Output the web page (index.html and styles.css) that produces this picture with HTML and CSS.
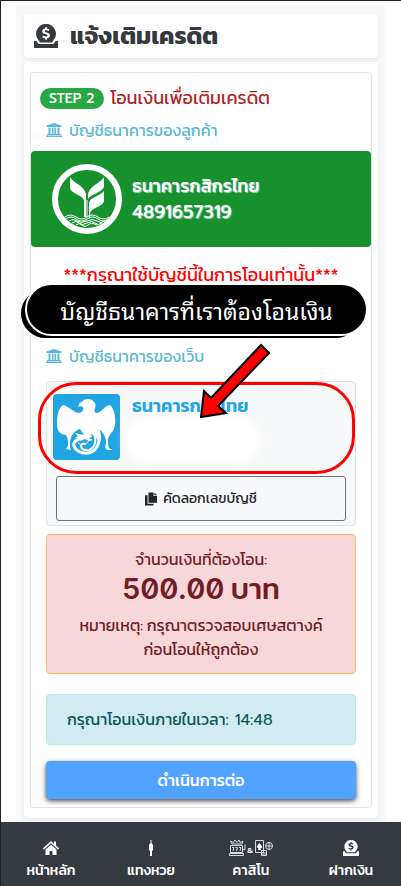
FILE: index.html
```
<!DOCTYPE html>
<html lang="th">
<head>
    <meta charset="UTF-8">
    <meta name="viewport" content="width=device-width, initial-scale=1.0">
    <title>แจ้งเติมเครดิต</title>
    <link rel="stylesheet" href="styles.css">
</head>
<body>
    <!-- shared icons -->
    <svg class="sprite" aria-hidden="true">
        <symbol id="icon-deposit" viewBox="0 0 24 24">
            <path fill-rule="evenodd" d="M12 0a9.800 9.800 0 0 1 7.500 16.200l-1.500 2.300H6l-1.500-2.300A9.800 9.800 0 0 1 12 0zM11.300 3v1.500c-1.900.2-3.100 1.200-3.100 2.700 0 1.700 1.500 2.400 3.200 2.900 1.500.4 2 .7 2 1.300 0 .7-.7 1.100-1.600 1.100-1 0-1.900-.4-2.800-1l-.9 1.700c.8.600 1.900 1 3.100 1.100v1.500h1.700v-1.500c1.900-.3 3-1.300 3-2.900 0-1.700-1.300-2.500-3.300-3-1.300-.4-1.900-.6-1.900-1.200s.6-.9 1.400-.9c.8 0 1.700.3 2.400.8l.9-1.700c-.7-.5-1.500-.8-2.500-.9V3z"/>
            <path d="M0 17h2.500l2 3h15l2-3H24v7H0z"/>
        </symbol>
        <symbol id="icon-bank" viewBox="0 0 16 14">
            <path d="M8 0l7.500 2.500V4H.5V2.500zM2.500 4.500h2V11h-2zM6 4.500h1.500V11H6zM8.500 4.500H10V11H8.500zM11.500 4.500h2V11h-2zM1 11h14v1H1zM0 12.500h16V14H0z"/>
        </symbol>
    </svg>

    <main class="wrapper">
        <header class="card page-title">
            <svg class="title-icon"><use href="#icon-deposit"/></svg>
            <h1>แจ้งเติมเครดิต</h1>
        </header>

        <section class="card content">
            <div class="step-box">
                <h2 class="step"><span class="badge">STEP 2</span> โอนเงินเพื่อเติมเครดิต</h2>

                <h3 class="label"><svg><use href="#icon-bank"/></svg>บัญชีธนาคารของลูกค้า</h3>
                <div class="customer-bank">
                    <svg class="kbank" viewBox="0 0 70 70" aria-hidden="true">
                        <circle cx="35" cy="35" r="32" fill="none" stroke="#fff" stroke-width="6"/>
                        <path fill="#fff" d="M18 13c3 6 14 8 16 17v23h-2V36C29 30 19 30 18 24zM52 13c-3 6-14 8-16 17v5c3-5 13-6 16-12zM52 27c-4 5-14 6-15 12v14h1V49C40 43 51 43 52 37zM34.500 36h1v17h-1z"/>
                        <g fill="none" stroke="#fff" stroke-width="1">
                            <path d="M13 53q5-4 11 0t11 0 11 0 11 0"/>
                            <path d="M14 55q5-4 10 0t11 0 11 0 10 0"/>
                            <path d="M17 57q4-3 8 0t10 0 10 0 8 0"/>
                            <path d="M20 59q4-3 7 0t8 0 8 0 7 0"/>
                            <path d="M24 61q3-3 6 0t6 0 9 0"/>
                        </g>
                    </svg>
                    <div class="bank-text">
                        <div>ธนาคารกสิกรไทย</div>
                        <div class="number">4891657319</div>
                    </div>
                </div>

                <div class="warning">
                    <p>***กรุณาใช้บัญชีนี้ในการโอนเท่านั้น***</p>
                    <div class="callout">บัญชีธนาคารที่เราต้องโอนเงิน</div>
                </div>

                <h3 class="label">
                    <svg><use href="#icon-bank"/></svg>บัญชีธนาคารของเว็บ
                </h3>
                <div class="web-bank">
                    <div class="web-bank-info">
                        <svg class="ktb" viewBox="0 0 67 66" aria-hidden="true">
                            <rect width="67" height="66" rx="4" fill="#1ea5e2"/>
                            <path fill="#fff" d="M26 10c1-2 3-2 4-3 1-2 7-3 10 0 3 2 3 5 2 7-1 3 0 5 2 5 5-1 7-7 13-8 4 3 6 13 5 20-1 7-6 9-7 14 0 4 0 7 1 9l3 2h-5l-2-3c2-4 1-11-3-15l-3-3c2 4 3 9 1 13-3-4-6-7-9-8l1 3-3 1 4 2-4 1-4-2-5 2-1-2-4-1 3-2-3-3 4 1 5 1-4-6c-5 1-10 7-10 14 0 3 0 5 1 7l-5-1 2-3c0-4 0-9-2-11C6 40 4 36 4 30c0-7 1-16 6-19 5 1 10 7 16 8 4-1 5-4 4-6-1-1-3-1-5 0z"/>
                            <g fill="none" stroke="#fff" stroke-linecap="round">
                                <path stroke-width="3" d="M45 40c3 9-2 18-10 19-7 1-13-3-14-7-1-3 1-6 4-6"/>
                                <path stroke-width="2" d="M40 39c4 6 3 14-4 17-4 1-8-1-8-4 0-2 2-3 4-2"/>
                                <path stroke-width="1" d="M25 49c4 3 9 2 11-3"/>
                            </g>
                        </svg>
                        <div class="bank-name">ธนาคารกรุงไทย</div>
                        <div class="smudge"></div>
                        <div class="highlight"></div>
                        <svg class="arrow" viewBox="0 0 72 78" aria-hidden="true">
                            <path fill="#f00" stroke="#000" stroke-width="2" d="M3 74L6 48l7 7L63 2l8 8-51 53 8 7z"/>
                        </svg>
                    </div>
                    <button type="button" class="copy-btn">
                        <svg viewBox="0 0 14 15" aria-hidden="true"><path d="M4 0h6v4h4v8H4zM11 0l3 3h-3zM0 3h3v10h7v2H0z"/></svg>
                        คัดลอกเลขบัญชี
                    </button>
                </div>

                <div class="amount">
                    <p>จำนวนเงินที่ต้องโอน:</p>
                    <strong><span class="money">500.00</span> บาท</strong>
                    <p>หมายเหตุ: กรุณาตรวจสอบเศษสตางค์<br>ก่อนโอนให้ถูกต้อง</p>
                </div>

                <div class="timer">กรุณาโอนเงินภายในเวลา<span class="number">: 14:48</span></div>
                <button type="button" class="next-btn">ดำเนินการต่อ</button>
            </div>
        </section>
    </main>

    <nav class="bottom-nav">
        <a href="#">
            <svg width="16" height="16" viewBox="0 0 16 16"><path d="M8 1l3 2.700V1.500h2v4l3 2.800-1 1.200L8 3.300 1 9.500 0 8.300zM8 4.800l5.500 4.800V15H9.500v-4h-3v4h-4V9.600z"/></svg>
            <span>หน้าหลัก</span>
        </a>
        <a href="#">
            <svg width="16" height="16" viewBox="0 0 16 16"><path d="M7.500 0h1v3l1.500 2v5l-1 1v5H7v-5l-1-1V5l1.500-2z"/></svg>
            <span>แทงหวย</span>
        </a>
        <a href="#">
            <svg width="44" height="16" viewBox="0 0 44 16">
                <g fill="none" stroke="#d8d9da">
                    <path d="M1.500 5.500h12v7h-12zM.5 13.500h14v2H.500zM14 9.500h2v-5M3 4L1.500 1l3 1.500L6 0l2 2.500L10 0l1 2.500L14 1l-1 3z"/>
                    <path d="M3 7.500h2L4 11M6.500 7.500h2L7.500 11M10 7.500h2L11 11"/>
                    <path d="M26.500.5h8v12h-8zM32.500 10.500h5v5h-5zM34 12v3M36 12v3"/>
                    <circle cx="40" cy="6" r="3.500"/><path d="M40 2.500v7M36.500 6h7"/>
                </g>
                <path d="M30.500 3l3 4-2 1.500.5 1.500h-3l.5-1.500-2-1.500z"/>
                <text x="18" y="13" font-size="9">&amp;</text>
            </svg>
            <span>คาสิโน</span>
        </a>
        <a href="#">
            <svg width="16" height="16"><use href="#icon-deposit"/></svg>
            <span>ฝากเงิน</span>
        </a>
    </nav>
</body>
</html>
```

FILE: styles.css
```
* {
    box-sizing: border-box;
}
body {
    margin: 0;
    padding: 5px 15px 60px;
    border-top: 1px solid #222;
    border-left: 1px solid #222;
    background: #fff;
    color: #212529;
    font-family: Kanit, Prompt, "Noto Sans Thai", "Noto Sans", sans-serif;
    font-size: 16px;
    line-height: 24px;
}
h1, h2, h3, p {
    margin: 0;
    font-weight: 400;
}
button {
    font-family: inherit;
    cursor: pointer;
}
.sprite {
    position: absolute;
    width: 0;
    height: 0;
}
.number {
    font-family: Prompt, Kanit, sans-serif;
}
.wrapper {
    padding: 8px;
    border-radius: 4px;
    background: #f8f9fa;
}
.card {
    border-radius: 4px;
    background: #fff;
    box-shadow: 0 2px 4px rgba(0, 0, 0, 0.08);
}
.page-title {
    display: flex;
    align-items: center;
    gap: 12px;
    height: 44px;
    margin-bottom: 4px;
    padding: 0 10px;
    color: #343a40;
}
.page-title h1 {
    font-size: 24px;
    font-weight: 700;
    line-height: 28px;
}
.title-icon {
    width: 24px;
    height: 24px;
    fill: #343a40;
}
.content {
    padding: 10px 6px;
}
.step-box {
    padding-bottom: 8px;
    border: 1px solid #dee2e6;
    border-radius: 4px;
}
.step {
    display: flex;
    align-items: center;
    gap: 7px;
    padding: 13px 9px 8px;
    color: #b21f24;
    font-size: 18px;
}
.badge {
    padding: 0 9px;
    border-radius: 11px;
    background: #28a745;
    color: #fff;
    font-family: Prompt, Kanit, sans-serif;
    font-size: 14px;
    font-weight: 500;
    line-height: 21px;
}
.label {
    display: flex;
    align-items: center;
    gap: 7px;
    padding: 0 15px;
    color: #5bb8d4;
    font-size: 16px;
}
.label svg {
    width: 16px;
    height: 14px;
    fill: #5bb8d4;
}
.customer-bank {
    display: flex;
    align-items: center;
    gap: 10px;
    height: 96px;
    margin-top: 9px;
    padding: 0 21px;
    border-radius: 4px;
    background: #16912e;
}
.kbank {
    width: 70px;
    height: 70px;
}
.bank-text {
    color: #fff;
    font-size: 18px;
    font-weight: 500;
    line-height: 27px;
    text-shadow: 1px 1px 1px rgba(255, 255, 255, 0.6);
}
.warning {
    position: relative;
    height: 97px;
    padding-top: 16px;
    color: #f00;
    font-size: 18px;
    text-align: center;
}
.callout {
    position: absolute;
    top: 38px;
    left: -4px;
    right: 5px;
    border-radius: 25px;
    background: #000;
    box-shadow: 0 0 0 2px #fff, -6px 4px 0 #000;
    color: #fff;
    font-family: "Noto Sans Thai Looped", "Noto Looped Thai", Sarabun, Loma, "Noto Serif Thai", Prompt, sans-serif;
    font-size: 23px;
    line-height: 49px;
}
.web-bank {
    margin: 13px 15px 8px;
    padding: 0 9px 4px;
    border: 1px solid #dee2e6;
    border-radius: 4px;
    background: #f8f9fa;
}
.web-bank-info {
    position: relative;
    display: flex;
    gap: 12px;
    height: 94px;
    margin-left: -3px;
    padding-top: 12px;
}
.ktb {
    width: 67px;
    height: 66px;
}
.bank-name {
    color: #1ea5e2;
    font-size: 18px;
    font-weight: 600;
}
.smudge {
    position: absolute;
    top: 40px;
    left: 76px;
    width: 128px;
    height: 36px;
    border-radius: 18px;
    background: #fff;
    box-shadow: 0 0 8px 4px #fff;
}
.highlight {
    position: absolute;
    top: 0;
    left: -15px;
    right: -9px;
    height: 92px;
    border: 3px solid #f00;
    border-radius: 38px;
}
.arrow {
    position: absolute;
    top: -39px;
    left: 145px;
    width: 72px;
    height: 78px;
}
.copy-btn {
    display: flex;
    align-items: center;
    justify-content: center;
    gap: 6px;
    width: 100%;
    height: 45px;
    border: 1px solid #6c757d;
    border-radius: 3px;
    background: transparent;
    color: #212529;
    font-size: 14px;
}
.copy-btn svg {
    width: 12px;
    height: 14px;
    fill: #212529;
}
.amount {
    margin: 0 15px;
    padding: 12px;
    border: 1px solid #fabb60;
    border-radius: 4px;
    background: #f8d7da;
    color: #721c24;
    text-align: center;
}
.amount strong {
    display: block;
    margin-bottom: 6px;
    font-size: 29px;
    font-weight: 500;
    line-height: 36px;
}
.money {
    font-family: Inter, sans-serif;
    font-weight: 600;
    font-variant-numeric: slashed-zero;
}
.timer {
    margin: 20px 15px 16px;
    padding: 12px 20px;
    border: 1px solid #bee5eb;
    border-radius: 4px;
    background: #d1ecf1;
    color: #0c5460;
}
.next-btn {
    display: block;
    width: calc(100% - 30px);
    height: 38px;
    margin: 0 15px;
    border: 0;
    border-radius: 4px;
    background: #52a3ff;
    box-shadow: 0 2px 5px rgba(0, 0, 0, 0.7);
    color: #fff;
    font-size: 16px;
    font-weight: 500;
}
.bottom-nav {
    position: fixed;
    left: 0;
    right: 0;
    bottom: 0;
    display: flex;
    height: 64px;
    border-left: 1px solid #222;
    background: #343a40;
}
.bottom-nav a {
    display: flex;
    flex: 1;
    flex-direction: column;
    align-items: center;
    padding-top: 18px;
    gap: 3px;
    color: #fff;
    font-size: 14px;
    font-weight: 500;
    text-decoration: none;
}
.bottom-nav svg {
    fill: #fff;
}
```
